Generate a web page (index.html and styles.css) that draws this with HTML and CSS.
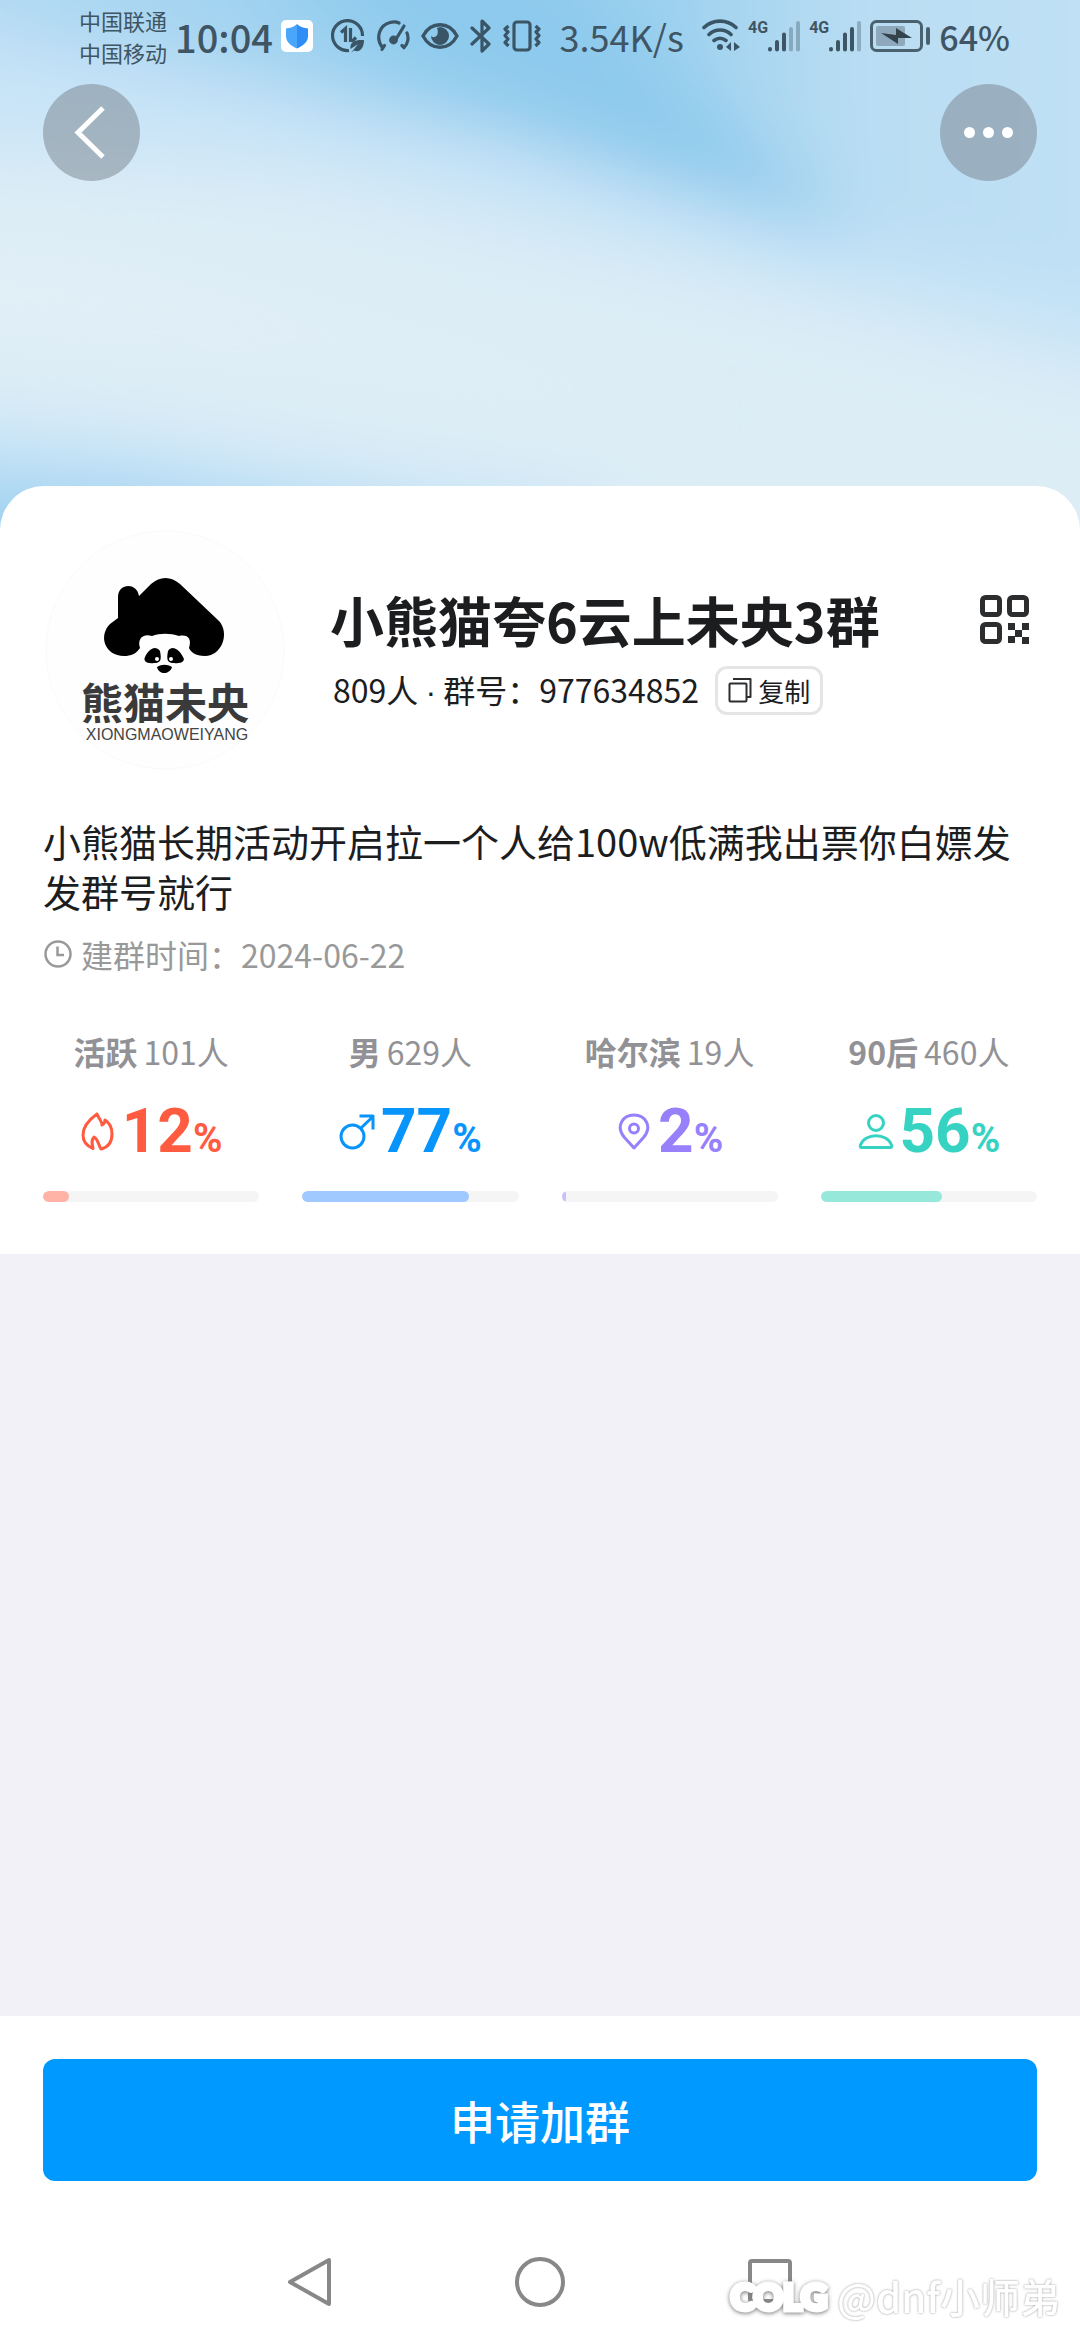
FILE: index.html
```html
<!DOCTYPE html>
<html lang="zh-CN">
<head>
    <meta charset="UTF-8">
    <meta name="viewport" content="width=device-width, initial-scale=1.0">
    <title>小熊猫夸6云上未央3群</title>
    <link rel="stylesheet" href="styles.css">
</head>
<body>
    <header class="hero">
        <svg class="hero-bg" viewBox="0 0 1080 540" preserveAspectRatio="none" aria-hidden="true">
            <defs>
                <filter id="soft" x="-20%" y="-40%" width="140%" height="180%"><feGaussianBlur stdDeviation="34"/></filter>
                <linearGradient id="sky" x1="0" y1="0" x2="1" y2="0">
                    <stop offset="0" stop-color="#b8dcf4"/>
                    <stop offset="0.38" stop-color="#98cfef"/>
                    <stop offset="0.6" stop-color="#9dd1ef"/>
                    <stop offset="0.75" stop-color="#b9ddf3"/>
                    <stop offset="1" stop-color="#c2e2f5"/>
                </linearGradient>
            </defs>
            <rect width="1080" height="540" fill="#dcedf6"/>
            <g filter="url(#soft)">
                <path d="M-100-100H1180V395L700 275 300 180-100 145z" fill="#c9e4f7"/>
                <path d="M-100-100H1180V335L1000 285 760 220 500 140 250 82-100 25z" fill="url(#sky)"/>
                <path d="M420-80L560-60 700 100 860 250 640 180 440 90 250-60z" fill="#8ecaed"/>
                <path d="M-100 250L100 270 500 370 700 430 300 360-100 330z" fill="#e2eff7"/>
                <path d="M-100 425L120 445 330 480 600 520V640H-100z" fill="#c3e2f7"/>
                <path d="M-100 490L120 500 400 550V640H-100z" fill="#9dd0ef"/>
            </g>
        </svg>

        <div class="status-bar">
            <div class="status-group">
                <div class="carriers">
                    <div>中国联通</div>
                    <div>中国移动</div>
                </div>
                <span class="clock">10:04</span>
                <svg width="32" height="32" viewBox="0 0 32 32">
                    <rect width="32" height="32" rx="5" fill="#fff"/>
                    <path d="M16 4C19 7 23 8 27 8.500V16C27 22 22 26 16 28.500z" fill="#2f8df6"/>
                    <path d="M16 4C13 7 9 8 5 8.500V16C5 22 10 26 16 28.500z" fill="#4aa6fb"/>
                </svg>
            </div>
            <div class="status-group status-icons">
                <svg width="34" height="34" viewBox="0 0 34 34" fill="none" stroke="#3a5566" stroke-width="3.200">
                    <path d="M18 31.500A15 15 0 1 1 31.500 17"/>
                    <path d="M10 13.500L14.500 9.500V23M19.500 9V21.500H22L25 18.500"/>
                    <path d="M19.500 30C18.500 22 25 20.500 33 21 33 30 28 34 23 31.500L20 34l7-9z" fill="#3a5566" stroke="none"/>
                </svg>
                <svg width="34" height="32" viewBox="0 0 34 32" fill="none" stroke="#3a5566" stroke-width="3.200" stroke-linecap="round">
                    <path d="M6 29.500L8.500 25.500M6 27C-1 17 4 5 14 2.500 18 1.500 21 2 23 3M31 13C33 18 32 24 28 27.500L26 25.500"/>
                    <path d="M28 6L19.500 20"/>
                    <circle cx="17.500" cy="20" r="2.800" fill="#3a5566"/>
                </svg>
                <svg width="38" height="28" viewBox="0 0 38 28">
                    <path d="M2 14C10-1 28-1 36 14 28 29 10 29 2 14z" fill="none" stroke="#3a5566" stroke-width="3.400"/>
                    <path d="M19 5A9 9 0 1 1 10 14C13 17 19 14 16 6z" fill="#3a5566"/>
                </svg>
                <svg width="22" height="36" viewBox="0 0 22 36" fill="none" stroke="#3a5566" stroke-width="3.200" stroke-linecap="round" stroke-linejoin="round">
                    <path d="M2 10L19 26 12 33V3L19 10 2 26"/>
                </svg>
                <svg width="38" height="32" viewBox="0 0 38 32" fill="none" stroke="#3a5566" stroke-width="3.200" stroke-linejoin="round">
                    <rect x="11" y="2" width="16" height="28" rx="3"/>
                    <path d="M5.500 6L2 9l3 3-3 3.500 3 3.500-3 3.500 3.500 3.500M32.500 6L36 9l-3 3 3 3.500-3 3.500 3 3.500-3.500 3.500"/>
                </svg>
            </div>
            <span class="speed">3.54K/s</span>
            <div class="status-group">
                <svg width="38" height="34" viewBox="0 0 38 34" fill="none" stroke="#3a5566" stroke-width="3.600" stroke-linecap="round">
                    <path d="M2 8.500C11 0 25 0 34 8.500M7 15.500C13 9.500 23 9.500 29 15.500M12 21.500C16 18.500 20 18.500 24 21.500"/>
                    <circle cx="18" cy="28" r="3" fill="#3a5566" stroke="none"/>
                    <path d="M29 23V32L24 28zM32 23V32L38 28z" fill="#3a5566" stroke="none"/>
                </svg>
                <div class="signal">
                    <span>4G</span>
                    <svg width="33" height="32" viewBox="0 0 33 32" stroke="#3f5563" stroke-width="4" stroke-linecap="round">
                        <path d="M2 29V29.500M9 22V29.500M16 14.500V29.500"/>
                        <path d="M23 9V29.500M30 3V29.500" opacity="0.350"/>
                    </svg>
                </div>
                <div class="signal">
                    <span>4G</span>
                    <svg width="33" height="32" viewBox="0 0 33 32" stroke="#3f5563" stroke-width="4" stroke-linecap="round">
                        <path d="M2 29V29.500M9 22V29.500M16 14.500V29.500M23 9V29.500"/>
                        <path d="M30 3V29.500" opacity="0.350"/>
                    </svg>
                </div>
                <svg width="61" height="32" viewBox="0 0 61 32">
                    <rect x="1.500" y="1.500" width="50" height="29" rx="5" fill="none" stroke="#4a6170" stroke-width="3"/>
                    <rect x="6" y="6" width="29" height="20" rx="2" fill="#8da9bb"/>
                    <path d="M11 13L26 15 26 8 42 18 28 18 28 24z" fill="#34424c"/>
                    <path d="M58 9V23" stroke="#4a6170" stroke-width="4" stroke-linecap="round"/>
                </svg>
                <span class="battery">64%</span>
            </div>
        </div>

        <nav class="top-nav">
            <button class="round-btn" type="button" aria-label="返回">
                <svg width="97" height="97" viewBox="0 0 97 97" fill="none" stroke="#fff" stroke-width="5">
                    <path d="M60 24L35 48.500 60 73"/>
                </svg>
            </button>
            <button class="round-btn" type="button" aria-label="更多">
                <svg width="97" height="97" viewBox="0 0 97 97" fill="#fff">
                    <circle cx="29.500" cy="48.500" r="5.500"/>
                    <circle cx="48.500" cy="48.500" r="5.500"/>
                    <circle cx="67.500" cy="48.500" r="5.500"/>
                </svg>
            </button>
        </nav>
    </header>

    <main class="card">
        <section class="group">
            <svg class="avatar" width="244" height="240" viewBox="0 0 244 240" role="img" aria-label="熊猫未央">
                <circle cx="122" cy="120" r="119" fill="#fefefe" stroke="#fafafa"/>
                <g transform="translate(2 0)">
                    <path d="M73 88V67C73 53 92 52 94 66L106 54C115 46 126 46 135 54L174 91C185 103 177 126 160 126 150 126 146 122 144 118 147 109 143 104 134 106 125 103 115 103 107 106 98 103 92 109 95 118 91 124 86 126 79 126 60 126 53 106 65 94z" fill="#000"/>
                    <path d="M115 121C117 131 115 133 109 133 102 134 98 131 100 127 104 119 110 115 115 121zM123 121C121 131 123 133 129 133 136 134 141 131 138 127 134 119 127 115 123 121zM112 137C117 134 122 134 127 137 126 141 122 143 119.500 143 116 143 113 141 112 137z" fill="#000"/>
                    <circle cx="112" cy="129" r="2" fill="#fff"/>
                    <circle cx="126" cy="129" r="2" fill="#fff"/>
                </g>
                <text class="logo-cn" x="122" y="189" text-anchor="middle">熊猫未央</text>
                <text class="logo-en" x="124" y="210" text-anchor="middle">XIONGMAOWEIYANG</text>
            </svg>
            <div class="group-info">
                <div class="title-row">
                    <h1>小熊猫夸6云上未央3群</h1>
                    <button class="qr-btn" type="button" aria-label="群二维码">
                        <svg width="49" height="49" viewBox="0 0 49 49" fill="#2b2d2f">
                            <g fill="none" stroke="#2b2d2f" stroke-width="5">
                                <rect x="2.500" y="2.500" width="17" height="17" rx="3"/>
                                <rect x="29.500" y="2.500" width="17" height="17" rx="3"/>
                                <rect x="2.500" y="29.500" width="17" height="17" rx="3"/>
                            </g>
                            <path d="M28 28h7v7h-7zM42 28h7v7h-7zM35 35h7v7h-7zM28 41h7v7h-7zM42 42h7v7h-7z"/>
                        </svg>
                    </button>
                </div>
                <div class="meta-row">
                    <span>809人 <span class="dot">·</span> 群号：977634852</span>
                    <button class="copy-btn" type="button">
                        <svg width="24" height="26" viewBox="0 0 24 26" fill="none" stroke="#2b2d2f" stroke-width="2" stroke-linejoin="round">
                            <rect x="1.500" y="6.500" width="17" height="18" rx="1"/>
                            <path d="M5 2H22.500V20H19"/>
                        </svg>
                        复制
                    </button>
                </div>
            </div>
        </section>

        <p class="desc">小熊猫长期活动开启拉一个人给100w低满我出票你白嫖发发群号就行</p>

        <div class="created">
            <svg width="30" height="30" viewBox="0 0 30 30" fill="none" stroke="#999" stroke-width="2.500">
                <circle cx="15" cy="15" r="12.500"/>
                <path d="M14.500 7.500V16H21"/>
            </svg>
            <span>建群时间：2024-06-22</span>
        </div>

        <section class="stats">
            <div class="stat stat-active">
                <div class="stat-label"><b>活跃</b><span>101人</span></div>
                <div class="stat-value">
                    <svg width="36" height="40" viewBox="0 0 36 40">
                        <path d="M17 3C10 8 3 15 3 24 3 31 7 35 13 37.500 12 33 11 29 14 26 18 28 18 33 21 38 29 36 32 30 32 23 32 16 30 12 25 9 25 12 24 13 22 14 22 10 19 8 17 3z"/>
                    </svg>
                    <strong>12<small>%</small></strong>
                </div>
                <div class="bar"><div class="bar-fill" style="width: 12%"></div></div>
            </div>
            <div class="stat stat-male">
                <div class="stat-label"><b>男</b><span>629人</span></div>
                <div class="stat-value">
                    <svg width="36" height="40" viewBox="0 0 36 40">
                        <circle cx="13.500" cy="25.500" r="11.500"/>
                        <path d="M21.500 17.500L34 5.500M20.500 5H34V18.500"/>
                    </svg>
                    <strong>77<small>%</small></strong>
                </div>
                <div class="bar"><div class="bar-fill" style="width: 77%"></div></div>
            </div>
            <div class="stat stat-city">
                <div class="stat-label"><b>哈尔滨</b><span>19人</span></div>
                <div class="stat-value">
                    <svg width="36" height="40" viewBox="0 0 36 40">
                        <path d="M18 37L8.500 26.500C-1 15 7 4 18 4S37 15 27.500 26.500z"/>
                        <circle cx="18" cy="17.500" r="4.500"/>
                    </svg>
                    <strong>2<small>%</small></strong>
                </div>
                <div class="bar"><div class="bar-fill" style="width: 2%"></div></div>
            </div>
            <div class="stat stat-age">
                <div class="stat-label"><b>90后</b><span>460人</span></div>
                <div class="stat-value">
                    <svg width="36" height="40" viewBox="0 0 36 40">
                        <circle cx="18" cy="12" r="7.500"/>
                        <path d="M4 36.500H32C34 36.500 34 35 33.500 34 29 21.500 7 21.500 2.500 34 2 35 2 36.500 4 36.500z"/>
                    </svg>
                    <strong>56<small>%</small></strong>
                </div>
                <div class="bar"><div class="bar-fill" style="width: 56%"></div></div>
            </div>
        </section>
    </main>

    <footer class="footer">
        <div class="join">
            <button class="join-btn" type="button">申请加群</button>
        </div>
        <div class="system-nav">
            <button type="button" aria-label="后退">
                <svg width="52" height="52" viewBox="0 0 52 52"><path d="M45 4V48L6 26z"/></svg>
            </button>
            <button type="button" aria-label="主屏幕">
                <svg width="52" height="52" viewBox="0 0 52 52"><circle cx="26" cy="26" r="23"/></svg>
            </button>
            <button type="button" aria-label="最近任务">
                <svg width="52" height="52" viewBox="0 0 52 52"><rect x="6" y="5" width="40" height="40" rx="2"/></svg>
            </button>
        </div>
        <div class="watermark">
            <span class="watermark-logo">COLG</span>
            <span class="watermark-name">@dnf小师弟</span>
        </div>
    </footer>
</body>
</html>
```
FILE: styles.css
```css
* {
    box-sizing: border-box;
}
body {
    margin: 0;
    min-height: 100vh;
    display: flex;
    flex-direction: column;
    background: #f2f1f7;
    color: #1c1d1f;
    font-family: "Noto Sans CJK SC", sans-serif;
}
button {
    margin: 0;
    padding: 0;
    border: none;
    background: none;
    color: inherit;
    font-family: inherit;
    cursor: pointer;
}
svg {
    display: block;
    flex-shrink: 0;
}

/* header */
.hero {
    position: relative;
    padding-bottom: 349px;
    overflow: hidden;
}
.hero-bg {
    position: absolute;
    inset: 0;
    width: 100%;
    height: 100%;
    z-index: -1;
}
.status-bar {
    display: flex;
    justify-content: space-between;
    align-items: center;
    height: 72px;
    padding: 0 70px 0 79px;
    color: #3f5563;
    white-space: nowrap;
}
.status-group {
    display: flex;
    align-items: center;
    gap: 8px;
}
.status-icons {
    gap: 11px;
}
.carriers {
    font-size: 22px;
    line-height: 32px;
}
.clock {
    font-size: 38px;
    font-weight: 500;
}
.speed {
    font-size: 36px;
}
.battery {
    font-size: 34px;
    font-weight: 500;
}
.signal {
    display: flex;
    align-items: flex-start;
}
.signal span {
    font-family: Roboto, sans-serif;
    font-size: 16px;
    font-weight: 700;
    line-height: 16px;
}
.top-nav {
    display: flex;
    justify-content: space-between;
    padding: 12px 43px 0;
}
.round-btn {
    border-radius: 50%;
    background: rgba(120, 130, 140, 0.5);
}

/* group card */
.card {
    position: relative;
    margin-top: -44px;
    padding: 44px 43px 52px;
    border-radius: 44px 44px 0 0;
    background: #fff;
}
.group {
    display: flex;
    align-items: center;
    gap: 43px;
}
.logo-cn {
    font-size: 42px;
    font-weight: 700;
    fill: #3a3a3a;
}
.logo-en {
    font-family: "Liberation Sans", sans-serif;
    font-size: 16px;
    fill: #444;
}
.group-info {
    flex: 1;
}
.title-row {
    display: flex;
    justify-content: space-between;
    align-items: center;
    padding-right: 8px;
}
h1 {
    margin: 0;
    font-size: 54px;
    font-weight: 700;
    line-height: 70px;
}
.meta-row {
    display: flex;
    align-items: center;
    gap: 16px;
    margin-top: 10px;
    padding-left: 3px;
    font-size: 32px;
    line-height: 48px;
}
.dot {
    font-family: "Liberation Sans", sans-serif;
}
.copy-btn {
    display: flex;
    align-items: center;
    gap: 6px;
    height: 49px;
    padding: 0 10px;
    border: 3px solid #e5e5e5;
    border-radius: 12px;
    font-size: 26px;
}
.desc {
    margin: 46px 0 0;
    font-size: 38px;
    line-height: 50px;
}
.created {
    display: flex;
    align-items: center;
    gap: 8px;
    margin-top: 18px;
    color: #999;
    font-size: 32px;
    line-height: 40px;
}

/* stats */
.stats {
    display: grid;
    grid-template-columns: repeat(4, 1fr);
    gap: 43px;
    margin-top: 55px;
}
.stat-label {
    display: flex;
    justify-content: center;
    gap: 6px;
    color: #929296;
    font-size: 32px;
    line-height: 44px;
    white-space: nowrap;
}
.stat-value {
    display: flex;
    justify-content: center;
    align-items: center;
    gap: 6px;
    height: 60px;
    margin: 28px 0 30px;
}
.stat-value svg {
    fill: none;
    stroke: currentColor;
    stroke-width: 3;
    stroke-linejoin: round;
}
.stat-value strong {
    font-family: Roboto, sans-serif;
    font-size: 62px;
    font-weight: 700;
    line-height: 60px;
}
.stat-value small {
    font-size: 40px;
    line-height: 40px;
}
.bar {
    height: 11px;
    border-radius: 6px;
    background: #f5f5f5;
    overflow: hidden;
}
.bar-fill {
    height: 100%;
    border-radius: 6px;
}
.stat-active .stat-value { color: #ff5b40; }
.stat-active .bar-fill { background: #ffb3a7; }
.stat-male .stat-value { color: #0794fb; }
.stat-male .bar-fill { background: #9fc9ff; }
.stat-city .stat-value { color: #9880fb; }
.stat-city .bar-fill { background: #cbc0fa; border-radius: 2px; }
.stat-age .stat-value { color: #36d2c2; }
.stat-age .bar-fill { background: #96e8da; }

/* bottom */
.footer {
    position: relative;
    margin-top: auto;
    background: #fff;
}
.join {
    padding: 43px;
}
.join-btn {
    display: block;
    width: 100%;
    height: 122px;
    border-radius: 12px;
    background: #0099ff;
    color: #fff;
    font-size: 45px;
    font-weight: 500;
}
.system-nav {
    display: flex;
    justify-content: center;
    align-items: center;
    gap: 178px;
    height: 116px;
}
.system-nav svg {
    fill: none;
    stroke: #888;
    stroke-width: 4;
    stroke-linejoin: round;
}
.watermark {
    position: absolute;
    right: 20px;
    bottom: 16px;
    display: flex;
    align-items: center;
    gap: 10px;
    color: #fff;
    line-height: 56px;
    white-space: nowrap;
}
.watermark-logo {
    font-family: Lato, sans-serif;
    font-size: 36px;
    font-weight: 900;
    -webkit-text-stroke: 5px #fff;
    filter: drop-shadow(0 1px 2px #777);
}
.watermark-name {
    font-size: 40px;
    font-weight: 500;
    filter: drop-shadow(0 0 1px #999);
}
```
